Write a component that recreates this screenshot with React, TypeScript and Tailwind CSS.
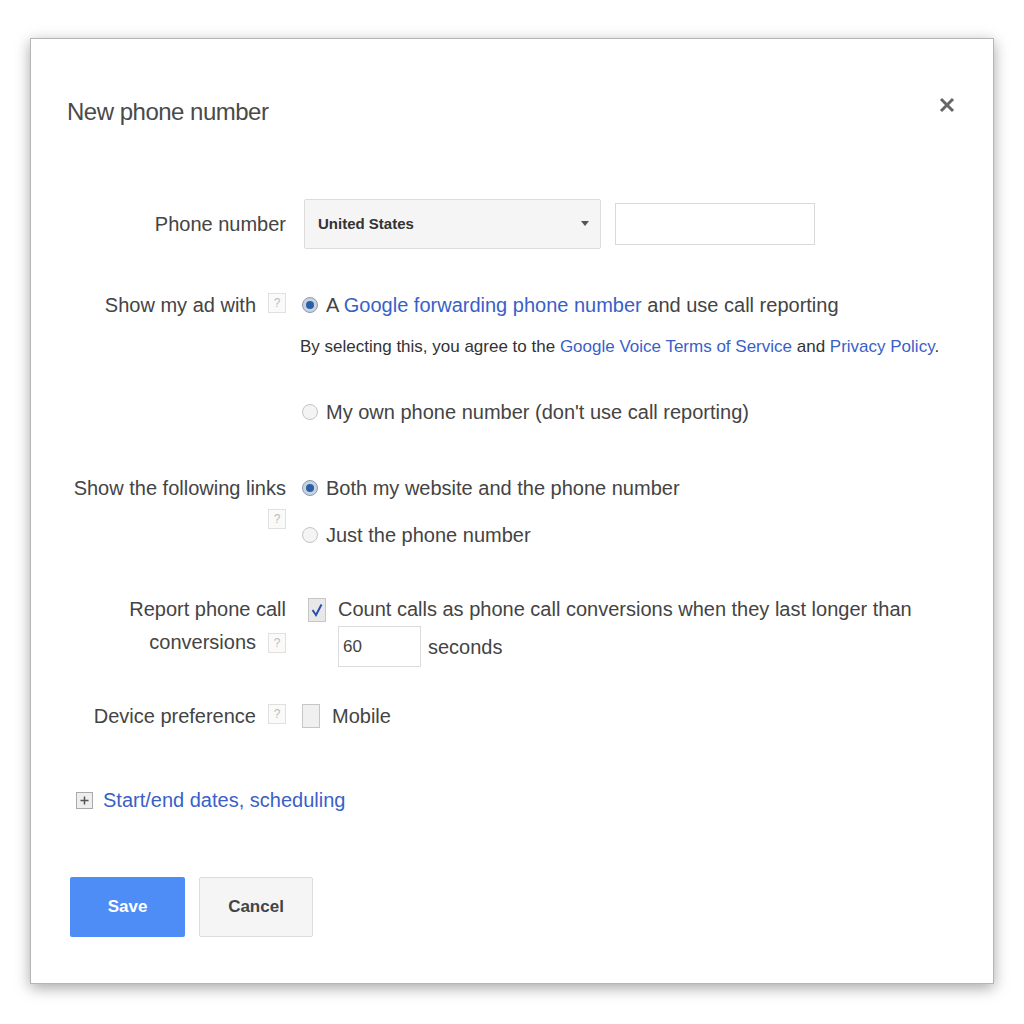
import React from "react";

const Help = () => (
  <span className="inline-flex h-[20px] w-[18px] shrink-0 items-center justify-center border border-[#e0e0e0] bg-[#fafafa] text-[12px] leading-none text-[#bbb]">?</span>
);

const Radio = ({ checked }: { checked?: boolean }) => (
  <span
    className={
      "inline-flex h-[16px] w-[16px] shrink-0 items-center justify-center rounded-full border " +
      (checked ? "border-[#8a9bb0] bg-[#c9d3df]" : "border-[#c4c4c4] bg-[#f4f4f4]")
    }
  >
    {checked && <span className="h-[8px] w-[8px] rounded-full bg-[#2a5fa8]" />}
  </span>
);

const Link = ({ children }: { children: React.ReactNode }) => (
  <span className="text-[#3a5fc8]">{children}</span>
);

export default function App() {
  return (
    <div
      className="min-h-[1024px] w-[1024px] bg-white pt-[38px] pl-[30px]"
      style={{ fontFamily: '"Liberation Sans", Arial, sans-serif' }}
    >
      <div className="relative h-[946px] w-[964px] border border-[#b5b5b5] bg-white pl-[36px] pt-[58px] shadow-[0_4px_14px_rgba(0,0,0,0.35)]">
        <div className="text-[24px] leading-[30px] tracking-[-0.5px] text-[#4a4a4a]">New phone number</div>
        <svg className="absolute left-[908px] top-[58px]" width="16" height="16" viewBox="0 0 16 16">
          <path d="M2 2 L14 14 M14 2 L2 14" stroke="#666" strokeWidth="3" />
        </svg>

        <div className="mt-[72px] flex flex-col text-[20px] leading-[24px] text-[#444]">
          {/* Phone number */}
          <div className="flex items-center">
            <div className="w-[219px] text-right">Phone number</div>
            <div className="ml-[18px] flex h-[50px] w-[297px] items-center justify-between rounded-[2px] border border-[#dcdcdc] bg-[#f5f5f5] pl-[13px] pr-[10px] text-[15px] font-bold text-[#333]">
              <span>United States</span>
              <svg width="10" height="6" viewBox="0 0 10 6"><path d="M1 0 L9 0 L5 5 Z" fill="#555" /></svg>
            </div>
            <div className="ml-[14px] h-[42px] w-[200px] border border-[#d9d9d9] bg-white" />
          </div>

          {/* Show my ad with */}
          <div className="mt-[44px] flex">
            <div className="flex w-[219px] justify-end gap-[12px]">
              <span>Show my ad with</span>
              <Help />
            </div>
            <div className="ml-[16px] flex flex-col">
              <div className="flex items-center gap-[8px]">
                <Radio checked />
                <span>
                  A <Link>Google forwarding phone number</Link> and use call reporting
                </span>
              </div>
              <div className="-ml-[2px] mt-[20px] whitespace-nowrap text-[17px] leading-[20px] text-[#333]">
                By selecting this, you agree to the <Link>Google Voice Terms of Service</Link> and <Link>Privacy Policy</Link>.
              </div>
              <div className="mt-[43px] flex items-center gap-[8px]">
                <Radio />
                <span>My own phone number (don't use call reporting)</span>
              </div>
            </div>
          </div>

          {/* Show the following links */}
          <div className="mt-[52px] flex">
            <div className="flex w-[219px] flex-col items-end">
              <span className="whitespace-nowrap">Show the following links</span>
              <span className="mt-[4px]"><Help /></span>
            </div>
            <div className="ml-[16px] flex flex-col">
              <div className="flex items-center gap-[8px]">
                <Radio checked />
                <span>Both my website and the phone number</span>
              </div>
              <div className="mt-[23px] flex items-center gap-[8px]">
                <Radio />
                <span>Just the phone number</span>
              </div>
            </div>
          </div>

          {/* Report phone call conversions */}
          <div className="mt-[50px] flex">
            <div className="flex w-[219px] flex-col items-end leading-[33px] -mt-[4px]">
              <span>Report phone call</span>
              <span className="flex items-center gap-[12px]">
                <span>conversions</span>
                <Help />
              </span>
            </div>
            <div className="ml-[22px] flex items-start gap-[14px]">
              <span className="mt-[1px] flex h-[24px] w-[18px] shrink-0 items-center justify-center border border-[#c6c6c6] bg-[#e8e8e8]">
                <svg width="12" height="14" viewBox="0 0 12 14"><path d="M1.5 7 L5 12 L10.5 1.5" stroke="#2b50a8" strokeWidth="2" fill="none" /></svg>
              </span>
              <div className="-ml-[2px] flex flex-col">
                <span className="whitespace-nowrap">Count calls as phone call conversions when they last longer than</span>
                <div className="mt-[5px] flex items-center gap-[7px]">
                  <div className="flex h-[41px] w-[83px] items-center border border-[#dcdcdc] pl-[4px] text-[17px] text-[#444]">60</div>
                  <span>seconds</span>
                </div>
              </div>
            </div>
          </div>

          {/* Device preference */}
          <div className="mt-[37px] flex">
            <div className="flex w-[219px] justify-end gap-[12px]">
              <span>Device preference</span>
              <Help />
            </div>
            <div className="ml-[16px] flex items-center gap-[12px]">
              <span className="h-[24px] w-[18px] border border-[#c6c6c6] bg-[#f0f0f0]" />
              <span>Mobile</span>
            </div>
          </div>

          {/* Start/end dates */}
          <div className="ml-[9px] mt-[60px] flex items-center gap-[10px]">
            <span className="flex h-[17px] w-[17px] items-center justify-center border border-[#aaa] bg-[#eee]">
              <svg width="9" height="9" viewBox="0 0 9 9"><path d="M4.5 0.5 V8.5 M0.5 4.5 H8.5" stroke="#555" strokeWidth="1.5" /></svg>
            </span>
            <span className="text-[#3a5fc8]">Start/end dates, scheduling</span>
          </div>

          {/* Buttons */}
          <div className="ml-[3px] mt-[65px] flex gap-[14px]">
            <button className="h-[60px] w-[115px] rounded-[2px] bg-[#4d8df5] text-[17px] font-bold text-white">Save</button>
            <button className="h-[60px] w-[114px] rounded-[2px] border border-[#dcdcdc] bg-[#f5f5f5] text-[17px] font-bold text-[#444]">Cancel</button>
          </div>
        </div>
      </div>
    </div>
  );
}
